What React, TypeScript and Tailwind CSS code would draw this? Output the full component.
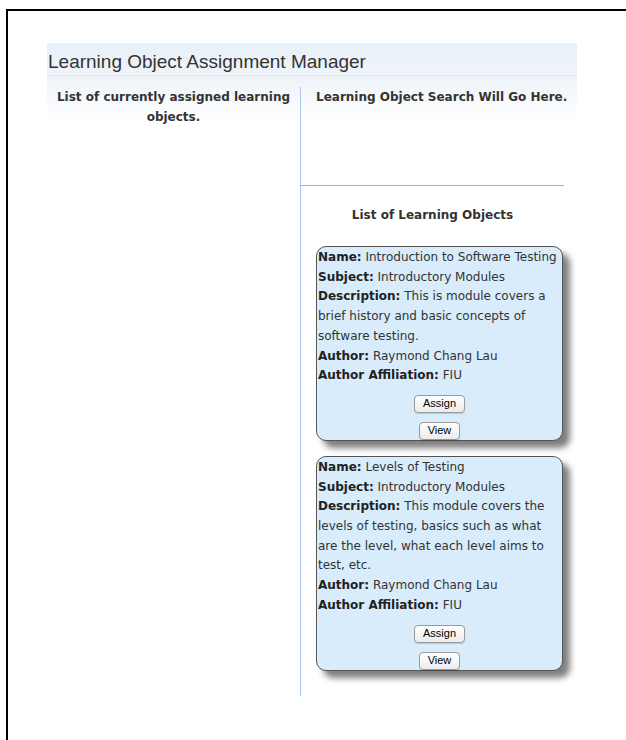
const objects = [
  {
    name: "Introduction to Software Testing",
    subject: "Introductory Modules",
    description: "This is module covers a brief history and basic concepts of software testing.",
    author: "Raymond Chang Lau",
    affiliation: "FIU",
  },
  {
    name: "Levels of Testing",
    subject: "Introductory Modules",
    description:
      "This module covers the levels of testing, basics such as what are the level, what each level aims to test, etc.",
    author: "Raymond Chang Lau",
    affiliation: "FIU",
  },
];

function AquaButton({ label }: { label: string }) {
  return (
    <button className="h-[18px] px-[8px] rounded-[4px] border border-[#9a9a9a] bg-[linear-gradient(#ffffff,#ececec)] text-[11px] leading-none text-black shadow-[0_1px_1px_rgba(0,0,0,0.15)] font-['Liberation_Sans',sans-serif]">
      {label}
    </button>
  );
}

function ObjectCard({ o }: { o: (typeof objects)[number] }) {
  return (
    <div className="w-[247px] rounded-[10px] border border-[#555] bg-[#d8ecfb] shadow-[7px_7px_6px_#7f7f7f] text-[12px] leading-[19.7px] text-[#333]">
      <div className="pl-[1px] pt-[1px]">
        <div className="whitespace-nowrap"><b className="text-[#222]">Name:</b> {o.name}</div>
        <div><b className="text-[#222]">Subject:</b> {o.subject}</div>
        <div><b className="text-[#222]">Description:</b> {o.description}</div>
        <div><b className="text-[#222]">Author:</b> {o.author}</div>
        <div><b className="text-[#222]">Author Affiliation:</b> {o.affiliation}</div>
      </div>
      <div className="flex flex-col items-center gap-[9px] mt-[9px]">
        <AquaButton label="Assign" />
        <AquaButton label="View" />
      </div>
    </div>
  );
}

export default function App() {
  return (
    <div className="min-h-[740px] bg-white pt-[9px] pl-[6px]">
      <div className="min-h-[731px] border-l-2 border-t-2 border-black pt-[32px] pl-[39px] font-['DejaVu_Sans',Verdana,sans-serif]">
        <div className="w-[530px]">
          <div className="h-[33px] border-b border-[#e1e9f1] bg-[linear-gradient(#e8f0f8,#eef4f9)] pl-[1px] pt-[8px]">
            <h1 className="text-[19px] leading-[22px] text-[#333] font-['Liberation_Sans',Arial,sans-serif]">
              Learning Object Assignment Manager
            </h1>
          </div>
          <div className="flex bg-[linear-gradient(#eef3f8,#ffffff)] bg-no-repeat bg-[length:100%_46px]">
            <div className="w-[253px] pt-[11px] px-[8px] text-center text-[12px] leading-[20px] font-bold text-[#333]">
              List of currently assigned learning objects.
            </div>
            <div className="mt-[11px] w-[264px] border-l-[1.5px] border-[#a9c6f2] pb-[25px]">
              <div className="h-[99px] border-b-[1.5px] border-[#8db4ee] pl-[15px] text-[12px] leading-[20px] font-bold text-[#333] whitespace-nowrap">
                Learning Object Search Will Go Here.
              </div>
              <div className="mt-[19px] text-center text-[12px] leading-[20px] font-bold text-[#333]">
                List of Learning Objects
              </div>
              <div className="mt-[21px] pl-[15px] flex flex-col gap-[15px]">
                {objects.map((o) => (
                  <ObjectCard key={o.name} o={o} />
                ))}
              </div>
            </div>
          </div>
        </div>
      </div>
    </div>
  );
}
